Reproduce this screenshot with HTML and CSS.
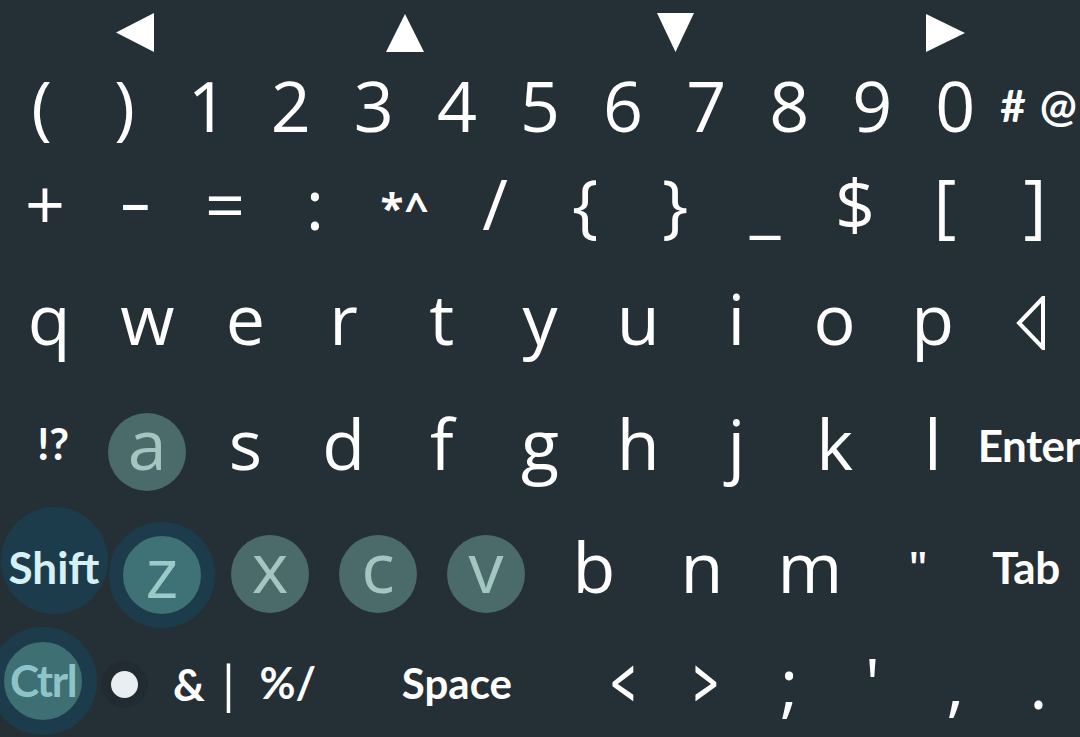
FILE: index.html
```html
<!DOCTYPE html>
<html>
<head>
<meta charset="utf-8">
<title>Keyboard</title>
<link rel="stylesheet" href="styles.css">
</head>
<body>
<div class="kb">
  <div class="row r1">
    <div class="k"><svg class="arrow" width="38" height="39" viewBox="0 0 38 39"><polygon points="0,19.5 38,0 38,39"/></svg></div>
    <div class="k"><svg class="arrow" width="38" height="38" viewBox="0 0 38 38"><polygon points="19,0 38,38 0,38"/></svg></div>
    <div class="k"><svg class="arrow" width="37" height="39" viewBox="0 0 37 39"><polygon points="0,0 37,0 18.5,39"/></svg></div>
    <div class="k"><svg class="arrow" width="39" height="38" viewBox="0 0 39 38"><polygon points="0,0 39,19 0,38"/></svg></div>
  </div>
  <div class="row r2">
    <div class="k"><span class="t">(</span></div>
    <div class="k"><span class="t">)</span></div>
    <div class="k"><span class="t">1</span></div>
    <div class="k"><span class="t">2</span></div>
    <div class="k"><span class="t">3</span></div>
    <div class="k"><span class="t">4</span></div>
    <div class="k"><span class="t">5</span></div>
    <div class="k"><span class="t">6</span></div>
    <div class="k"><span class="t">7</span></div>
    <div class="k"><span class="t">8</span></div>
    <div class="k"><span class="t">9</span></div>
    <div class="k"><span class="t">0</span></div>
    <div class="k"><span class="b hashat"><span>#</span><span>@</span></span></div>
  </div>
  <div class="row r3">
    <div class="k"><span class="t">+</span></div>
    <div class="k"><span class="t minus">-</span></div>
    <div class="k"><span class="t">=</span></div>
    <div class="k"><span class="t">:</span></div>
    <div class="k"><span class="b star">*^</span></div>
    <div class="k"><span class="t">/</span></div>
    <div class="k"><span class="t">{</span></div>
    <div class="k"><span class="t">}</span></div>
    <div class="k"><span class="t">_</span></div>
    <div class="k"><span class="t">$</span></div>
    <div class="k"><span class="t">[</span></div>
    <div class="k"><span class="t">]</span></div>
  </div>
  <div class="row r4">
    <div class="k"><span class="t">q</span></div>
    <div class="k"><span class="t">w</span></div>
    <div class="k"><span class="t">e</span></div>
    <div class="k"><span class="t">r</span></div>
    <div class="k"><span class="t">t</span></div>
    <div class="k"><span class="t">y</span></div>
    <div class="k"><span class="t">u</span></div>
    <div class="k"><span class="t">i</span></div>
    <div class="k"><span class="t">o</span></div>
    <div class="k"><span class="t">p</span></div>
    <div class="k"><svg class="bksp" width="30" height="54" viewBox="0 0 30 54"><polygon points="27,2 3,27 27,52" fill="none" stroke="#fff" stroke-width="4" stroke-linejoin="miter"/></svg></div>
  </div>
  <div class="row r5">
    <div class="k"><span class="b excl">!?</span></div>
    <div class="k"><div class="c c-lite"><span class="t">a</span></div></div>
    <div class="k"><span class="t">s</span></div>
    <div class="k"><span class="t">d</span></div>
    <div class="k"><span class="t">f</span></div>
    <div class="k"><span class="t">g</span></div>
    <div class="k"><span class="t">h</span></div>
    <div class="k"><span class="t">j</span></div>
    <div class="k"><span class="t">k</span></div>
    <div class="k"><span class="t">l</span></div>
    <div class="k k-enter"><span class="b enter">Enter</span></div>
  </div>
  <div class="row r6">
    <div class="k"><div class="shift"><span class="b">Shift</span></div></div>
    <div class="k"><div class="ring zring"><span class="t">z</span></div></div>
    <div class="k"><div class="c c-lite"><span class="t">x</span></div></div>
    <div class="k"><div class="c c-lite"><span class="t">c</span></div></div>
    <div class="k"><div class="c c-lite"><span class="t">v</span></div></div>
    <div class="k"><span class="t">b</span></div>
    <div class="k"><span class="t">n</span></div>
    <div class="k"><span class="t">m</span></div>
    <div class="k"><span class="quote">"</span></div>
    <div class="k"><span class="b tab">Tab</span></div>
  </div>
  <div class="row r7">
    <div class="k"><div class="ring ctrl"><span class="b">Ctrl</span></div></div>
    <div class="k"><div class="halo"><div class="dot"></div></div></div>
    <div class="k"><span class="b amp">&amp;<span class="pipe">|</span></span></div>
    <div class="k"><span class="b pct">%/</span></div>
    <div class="k space"><span class="b sp">Space</span></div>
    <div class="k"><span class="t chev">&lt;</span></div>
    <div class="k"><span class="t chev">&gt;</span></div>
    <div class="k"><span class="t">;</span></div>
    <div class="k"><span class="t">'</span></div>
    <div class="k"><span class="t">,</span></div>
    <div class="k"><span class="t">.</span></div>
  </div>
</div>
</body>
</html>
```

FILE: styles.css
```css
html, body {
  margin: 0;
  padding: 0;
  background: #252f36;
}

.kb {
  width: 1080px;
  height: 737px;
  display: flex;
  flex-direction: column;
  overflow: hidden;
  font-family: "Open Sans", "Noto Sans", sans-serif;
  color: #ffffff;
}

.row {
  display: grid;
  grid-template-rows: minmax(0, 1fr);
  flex: none;
}

.r1 { height: 69px;  grid-template-columns: repeat(4, 1fr); }
.r2 { height: 88px;  grid-template-columns: repeat(13, 1fr); }
.r3 { height: 109px; grid-template-columns: repeat(12, 1fr); }
.r4 { height: 122px; grid-template-columns: repeat(11, 1fr); }
.r5 { height: 125px; grid-template-columns: repeat(11, 1fr); }
.r6 { height: 115px; grid-template-columns: repeat(10, 1fr); }
.r7 { height: 109px; grid-template-columns: repeat(13, 1fr); }

.k {
  display: flex;
  align-items: center;
  justify-content: center;
  min-width: 0;
  min-height: 0;
}

.space { grid-column: span 3; }

.t {
  font-size: 70px;
  line-height: 1;
  font-weight: 400;
  white-space: nowrap;
}

.b {
  font-family: "Lato", "Open Sans", sans-serif;
  font-size: 44px;
  line-height: 1;
  font-weight: 700;
  white-space: nowrap;
}

/* row 1 arrows */
.arrow { fill: #ffffff; margin-bottom: 4px; }

/* row 2 */
.r2 .t { margin-bottom: 16px; }
.hashat { display: flex; gap: 14px; margin-bottom: 16px; }

/* row 3 */
.r3 .t { margin-bottom: 17px; }
.r3 .minus { display: inline-block; transform: scaleX(1.45); margin-bottom: 25px; font-weight: 500; }
.star { font-family: "Open Sans", sans-serif; font-size: 42px; margin-bottom: 10px; letter-spacing: 1px; }

/* row 4 */
.r4 .t { margin-bottom: 18px; }
.bksp { margin-bottom: 8px; }

/* row 5 */
.r5 .t { margin-bottom: 15px; }
.excl { font-size: 43px; margin-bottom: 14px; margin-left: 8px; }
.k-enter { justify-content: flex-start; }
.enter { margin-bottom: 11px; margin-left: -4px; letter-spacing: -0.6px; }

/* circles */
.c {
  width: 78px;
  height: 78px;
  border-radius: 50%;
  display: flex;
  align-items: center;
  justify-content: center;
  flex: none;
}
.c-lite { background: #4b6a6a; color: #a3c6c1; }
.r5 .c { margin-top: 3px; }
.r5 .c .t { margin-bottom: 18px; }
.r6 .c { margin-top: 7px; }
.r6 .c .t { margin-bottom: 16px; }

.shift {
  width: 107px;
  height: 107px;
  border-radius: 50%;
  background: #1c3c4b;
  color: #d5f1f7;
  display: flex;
  align-items: center;
  justify-content: center;
  flex: none;
  margin-bottom: 21px;
}
.shift .b { margin-top: 14px; }

.ring {
  box-sizing: border-box;
  border-radius: 50%;
  display: flex;
  align-items: center;
  justify-content: center;
  flex: none;
}
.zring {
  width: 106px;
  height: 106px;
  border: 14px solid #1c3c4b;
  background: #3f7277;
  color: #9ccac9;
  margin-top: 9px;
}
.zring .t { margin-bottom: 18px; }

/* row 6 */
.r6 .t { margin-bottom: 9px; }
.quote { font-size: 44px; line-height: 1; font-weight: 600; margin-bottom: 9px; }
.tab { margin-bottom: 7px; letter-spacing: -0.5px; }

/* row 7 */
.ctrl {
  width: 108px;
  height: 108px;
  border: 15px solid #1c3c4b;
  background: #3d6f73;
  color: #8ec4c7;
  margin-bottom: 3px;
  margin-left: 3px;
}
.ctrl .b { margin-bottom: 2px; letter-spacing: -1.5px; }

.halo {
  width: 47px;
  height: 47px;
  border-radius: 50%;
  background: #222b31;
  display: flex;
  align-items: center;
  justify-content: center;
  margin-top: 4px;
}
.dot {
  width: 27px;
  height: 27px;
  border-radius: 50%;
  background: #e9eef1;
}

.amp { margin-bottom: 2px; }
.pipe { font-family: "Open Sans", sans-serif; font-size: 50px; font-weight: 500; margin-left: 10px; }
.pct { margin-bottom: 2px; margin-right: 6px; }
.sp { font-size: 42px; }
.r7 .t { margin-bottom: 2px; }
.chev { display: inline-block; transform: scaleX(0.62); font-weight: 600; }
```
